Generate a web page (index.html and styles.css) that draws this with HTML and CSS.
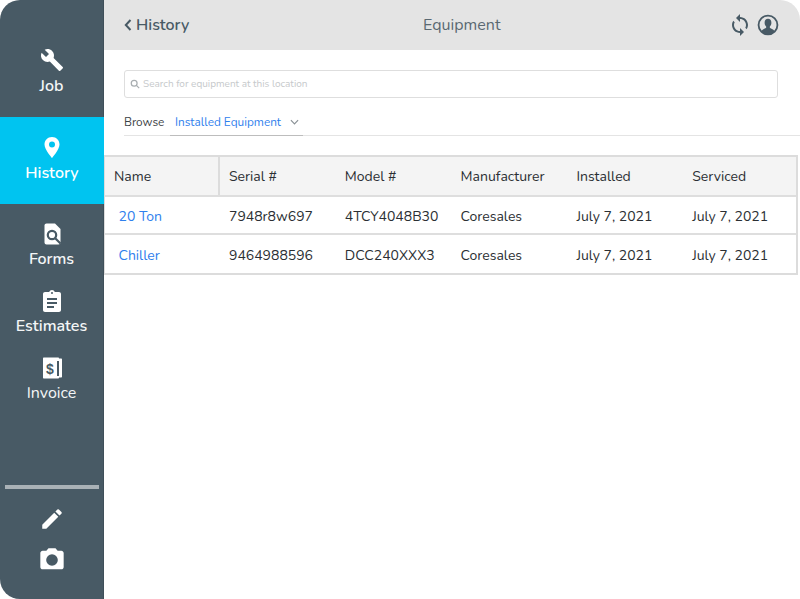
FILE: index.html
```html
<!DOCTYPE html>
<html lang="en">
<head>
<meta charset="utf-8">
<title>Equipment</title>
<link rel="stylesheet" href="styles.css">
</head>
<body>
<div class="app">
  <aside class="sidebar">
    <nav class="nav">
      <a class="nav-item job"><svg class="nav-icon" viewBox="0 0 24 24"><path d="M22.7 19l-9.1-9.1c.9-2.3.4-5-1.5-6.9-2-2-5-2.4-7.4-1.3L9 6 6 9 1.600 4.700C.4 7.100.9 10.100 2.900 12.100c1.900 1.900 4.600 2.400 6.900 1.500l9.100 9.100c.4.400 1 .4 1.400 0l2.300-2.300c.5-.4.5-1.100.1-1.400z"/></svg><span>Job</span></a>
      <a class="nav-item active"><svg class="nav-icon" viewBox="0 0 24 24"><path d="M12 2C7.580 2 4.500 5.300 4.500 9.500 4.500 14.500 12 23 12 23s7.500-8.500 7.500-13.500C19.500 5.300 16.420 2 12 2zm0 10.500a3 3 0 1 1 0-6 3 3 0 0 1 0 6z"/></svg><span>History</span></a>
      <a class="nav-item"><svg class="nav-icon" viewBox="0 0 24 24"><path d="M6.500 1.500H15l5.500 5.500v13.500c0 1.100-.9 2-2 2h-12c-1.100 0-2-.9-2-2v-17c0-1.100.9-2 2-2z"/><circle class="cut" cx="12" cy="13" r="4.200"/><path class="cut" d="m15 16 5.500 5.500"/></svg><span>Forms</span></a>
      <a class="nav-item"><svg class="nav-icon" viewBox="0 0 24 24"><path fill-rule="evenodd" d="M19 3h-4.200C14.400 1.800 13.300 1 12 1s-2.400.8-2.800 2H5c-1.100 0-2 .9-2 2v16c0 1.100.9 2 2 2h14c1.100 0 2-.9 2-2V5c0-1.100-.9-2-2-2zm-7 0a1 1 0 1 1 0 2 1 1 0 0 1 0-2zM7 9h10v2H7zm0 4h10v2H7zm0 4h7v2H7z"/></svg><span>Estimates</span></a>
      <a class="nav-item light"><svg class="nav-icon" viewBox="0 0 24 24"><path d="M4 1.500h14c.6 0 1 .4 1 1v19c0 .6-.4 1-1 1H4c-.6 0-1-.4-1-1v-19c0-.6.4-1 1-1z"/><path d="M19 2.500h2c.6 0 1 .4 1 1v17c0 .6-.4 1-1 1h-2z"/><rect class="gap" x="17" y="5" width="2" height="15"/><text x="10" y="18" class="dollar">$</text></svg><span>Invoice</span></a>
    </nav>
    <div class="tools">
      <div class="tools-rule"></div>
      <svg class="tool-icon pencil" viewBox="0 0 24 24"><path d="M3 17.250V21h3.750L17.810 9.940l-3.750-3.750L3 17.250zM20.710 7.040a1 1 0 0 0 0-1.410l-2.340-2.340a1 1 0 0 0-1.410 0l-1.830 1.830 3.750 3.750 1.830-1.830z"/></svg>
      <svg class="tool-icon" viewBox="0 0 24 24"><path fill-rule="evenodd" d="M9 2 7.170 4H4C2.900 4 2 4.900 2 6v12c0 1.100.9 2 2 2h16c1.100 0 2-.9 2-2V6c0-1.100-.9-2-2-2h-3.170L15 2H9zm3 5a5 5 0 1 1 0 10 5 5 0 0 1 0-10z"/></svg>
    </div>
  </aside>
  <main class="main">
    <header class="topbar">
      <a class="back"><svg class="back-icon" viewBox="0 0 8 12"><path d="M6.500 1 1.800 6l4.700 5"/></svg>History</a>
      <h1 class="title">Equipment</h1>
      <div class="top-actions">
        <svg class="sync" viewBox="0 0 24 24"><path d="M12 4V1L8 5l4 4V6c3.310 0 6 2.690 6 6 0 1.010-.25 1.970-.7 2.800l1.460 1.460A7.930 7.930 0 0 0 20 12c0-4.420-3.580-8-8-8zm0 14c-3.310 0-6-2.690-6-6 0-1.010.25-1.970.7-2.800L5.240 7.740A7.930 7.930 0 0 0 4 12c0 4.420 3.580 8 8 8v3l4-4-4-4v3z"/></svg>
        <svg class="user" viewBox="0 0 24 24"><circle cx="12" cy="12" r="10.300" class="user-ring"/><path d="M4.700 19.300c.6-2.800 4.300-3.200 5.300-4.300v-1.400c-1-.8-1.700-2.200-1.700-4.100C8.300 7 9.700 5.200 12 5.200s3.700 1.800 3.700 4.300c0 1.900-.7 3.300-1.700 4.100V15c1 1.100 4.700 1.500 5.300 4.300A10.300 10.300 0 0 1 12 22.300a10.300 10.300 0 0 1-7.300-3z"/></svg>
      </div>
    </header>
    <section class="filters">
      <div class="search">
        <svg class="search-icon" viewBox="0 0 12 12"><circle cx="5" cy="5" r="3.500"/><path d="m7.700 7.700 3.300 3.300"/></svg>
        <span>Search for equipment at this location</span>
      </div>
      <div class="browse">
        <span class="browse-label">Browse</span>
        <div class="select"><span>Installed Equipment</span><svg class="chev" viewBox="0 0 10 6"><path d="m1 1 4 4 4-4"/></svg></div>
      </div>
    </section>
    <div class="table">
      <div class="row head">
        <div class="cell name-col">Name</div><div class="cell">Serial #</div><div class="cell">Model #</div><div class="cell">Manufacturer</div><div class="cell">Installed</div><div class="cell">Serviced</div>
      </div>
      <div class="row">
        <div class="cell name-col"><a class="link">20 Ton</a></div><div class="cell">7948r8w697</div><div class="cell">4TCY4048B30</div><div class="cell">Coresales</div><div class="cell">July 7, 2021</div><div class="cell">July 7, 2021</div>
      </div>
      <div class="row">
        <div class="cell name-col"><a class="link">Chiller</a></div><div class="cell">9464988596</div><div class="cell">DCC240XXX3</div><div class="cell">Coresales</div><div class="cell">July 7, 2021</div><div class="cell">July 7, 2021</div>
      </div>
    </div>
  </main>
</div>
</body>
</html>
```
FILE: styles.css
```css
* { box-sizing: border-box; }
html, body { margin: 0; height: 100%; background: #fff; }
body { font-family: "Nunito", "Nunito Sans", "Lato", "Noto Sans", sans-serif; color: #2b2f33; overflow: hidden; }
.app { display: flex; width: 800px; height: 599px; }

.sidebar { width: 104px; flex: none; display: flex; flex-direction: column; justify-content: space-between; background: #485a65; border-radius: 20px 0 0 20px; border-right: 1px solid #3f4f59; color: #fff; }
.nav { display: flex; flex-direction: column; }
.nav-item { height: 67px; display: flex; flex-direction: column; align-items: center; padding-top: 18px; font-size: 16px; line-height: 22px; font-weight: 600; color: #f4f6f7; }
.nav-item.light { font-weight: 400; }
.nav-item.job { height: 117px; padding-top: 48px; }
.nav-item.active { height: 87px; background: #00c4f0; color: #fff; margin-right: -1px; }
.nav-icon { width: 24px; height: 24px; fill: #fff; flex: none; margin-bottom: 2px; }
.nav-item.job .nav-icon, .nav-item.active .nav-icon { margin-bottom: 3px; }
.cut { fill: none; stroke: #485a65; stroke-width: 2.200; }
.gap { fill: #485a65; }
.dollar { font: 700 14px "Liberation Sans", sans-serif; fill: #485a65; text-anchor: middle; }
.tools { display: flex; flex-direction: column; align-items: center; padding-bottom: 25px; }
.tools-rule { width: 94px; height: 4px; background: #a9b1b6; margin-bottom: 17px; }
.tool-icon { width: 28px; height: 28px; fill: #fff; margin-top: 14px; }
.tool-icon.pencil { margin-top: 0; width: 26px; height: 26px; }

.main { flex: 1; min-width: 0; display: flex; flex-direction: column; }
.topbar { height: 50px; background: #e4e4e4; border-top-right-radius: 20px; display: grid; grid-template-columns: 299px auto 1fr; align-items: center; padding: 0 21px 0 20px; }
.back { display: flex; align-items: center; gap: 4px; font-size: 16px; font-weight: 600; color: #485a65; }
.back-icon { width: 8px; height: 12px; fill: none; stroke: #485a65; stroke-width: 2; }
.title { margin: 0; font-size: 16px; font-weight: 400; color: #5a6972; }
.top-actions { display: flex; justify-content: flex-end; align-items: center; gap: 5px; }
.sync { width: 24px; height: 24px; fill: #485a65; }
.user { width: 22px; height: 22px; fill: #485a65; }
.user-ring { fill: #e4e4e4; stroke: #485a65; stroke-width: 2; }

.filters { padding: 20px 0 0 20px; }
.search { width: 654px; height: 28px; border: 1px solid #dedede; border-radius: 3px; display: flex; align-items: center; gap: 3px; padding: 0 0 1px 5px; font-size: 10px; color: #c6c9cb; }
.search-icon { width: 10px; height: 10px; fill: none; stroke: #a8adb0; stroke-width: 1.500; }
.browse { margin-top: 10px; height: 28px; display: flex; align-items: stretch; border-bottom: 1px solid #e4e4e4; font-size: 11.800px; }
.browse-label { width: 46px; display: flex; align-items: center; color: #3c4246; }
.select { width: 133px; display: flex; align-items: center; padding-left: 5px; color: #2f80ed; border-bottom: 1px solid #bdbdbd; margin-bottom: -1px; white-space: nowrap; }
.chev { width: 9px; height: 6px; margin-left: 9px; fill: none; stroke: #8a9196; stroke-width: 1.300; }

.table { margin: 19px 2px 0 0; border: 2px solid #dcdcdc; border-left-width: 1px; }
.row { display: grid; grid-template-columns: 114px repeat(5, 115.800px); height: 38px; align-items: center; font-size: 14px; border-bottom: 2px solid #dedede; }
.row:last-child { border-bottom: 0; }
.row.head { height: 40px; background: #f4f4f4; }
.cell { padding-left: 10px; height: 100%; display: flex; align-items: center; white-space: nowrap; }
.row:not(.head) .cell { padding-top: 3px; }
.head .name-col { padding-left: 9px; border-right: 2px solid #dcdcdc; margin-right: -1px; }
.row:not(.head) .name-col { padding-left: 13.500px; }
.link { color: #2f80ed; }
```
